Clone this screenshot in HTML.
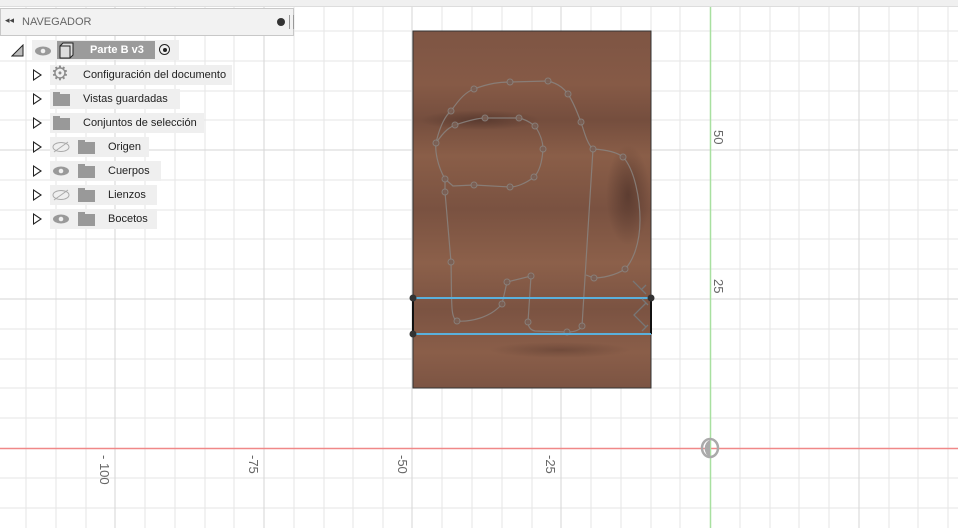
<!DOCTYPE html>
<html><head><meta charset="utf-8"><style>
body{margin:0;width:958px;height:528px;overflow:hidden;background:#fff;font-family:"Liberation Sans",sans-serif;position:relative}
.nav{position:absolute;left:0;top:8px;width:294px;height:28px;background:#f2f2f2;border:1px solid #c8c8c8;box-sizing:border-box}
.nav span{position:absolute;left:21px;top:7px;font-size:11px;color:#666}
.item{position:absolute;height:20px;background:#efefef;font-size:11px;color:#222;line-height:20px}
.tri{position:absolute;width:0;height:0;border-top:6px solid transparent;border-bottom:6px solid transparent;border-left:9px solid #222}
.tri:after{content:"";position:absolute;left:-8px;top:-4px;border-top:4px solid transparent;border-bottom:4px solid transparent;border-left:6px solid #fff}
.fold{position:absolute;width:17px;height:12px;background:#999}
.fold:before{content:"";position:absolute;left:0;top:-2px;width:7px;height:2px;background:#999}
</style></head><body>
<svg width="958" height="528" style="position:absolute;left:0;top:0">
<defs>
<linearGradient id="w" x1="0" y1="0" x2="0" y2="1">
<stop offset="0" stop-color="#7e5544"/><stop offset=".15" stop-color="#865a46"/><stop offset=".25" stop-color="#754e3e"/><stop offset=".35" stop-color="#8a5e48"/><stop offset=".5" stop-color="#7a5241"/><stop offset=".65" stop-color="#8c604a"/><stop offset=".78" stop-color="#7b5342"/><stop offset=".9" stop-color="#8a5e49"/><stop offset="1" stop-color="#7c5443"/>
</linearGradient>
<radialGradient id="d" cx=".5" cy=".5" r=".5"><stop offset="0" stop-color="#4e3229" stop-opacity=".7"/><stop offset="1" stop-color="#4e3229" stop-opacity="0"/></radialGradient>
</defs>
<rect x="0" y="0" width="958" height="6" fill="#f0f0f0"/>
<line x1="0" y1="6.5" x2="958" y2="6.5" stroke="#ddd"/>
<g stroke="#e6e6e6" stroke-width="1">
<path d="M26 7V528M56 7V528M86 7V528M145 7V528M175 7V528M205 7V528M234 7V528M294 7V528M324 7V528M353 7V528M383 7V528M442 7V528M472 7V528M502 7V528M532 7V528M591 7V528M621 7V528M651 7V528M680 7V528M740 7V528M770 7V528M799 7V528M829 7V528M889 7V528M918 7V528M948 7V528"/>
<path d="M0 31H958M0 61H958M0 91H958M0 120H958M0 180H958M0 210H958M0 239H958M0 269H958M0 329H958M0 359H958M0 388H958M0 418H958M0 478H958M0 508H958"/>
</g>
<g stroke="#d6d6d6"><path d="M115 7V528M264 7V528M412 7V528M561 7V528M859 7V528M0 150H958M0 299H958"/></g>
<rect x="413" y="31" width="238" height="357" fill="url(#w)" stroke="#333" stroke-width="1"/>
<ellipse cx="628" cy="195" rx="22" ry="50" fill="url(#d)"/>
<ellipse cx="480" cy="120" rx="60" ry="10" fill="url(#d)"/>
<ellipse cx="560" cy="350" rx="70" ry="8" fill="url(#d)" opacity=".6"/>
<g fill="none" stroke="#8a8480" stroke-width="1.2" opacity=".85">
<path d="M436 143C440 125 446 115 451 111C460 98 466 92 474 89C490 83 500 82 510 82L548 81C560 84 565 90 568 94C575 105 578 115 581 122C585 135 588 145 593 149L582 326C580 330 575 332 567 332L535 331C530 330 528 326 528 322L531 276L507 282L502 304C490 318 470 322 457 321C450 318 452 300 451 262L445 192L445 179C437 165 435 150 436 143Z"/>
<path d="M436 143C445 130 450 127 455 125C470 120 478 118 485 118L519 118C528 120 532 124 535 126C541 135 543 143 543 149C542 165 538 173 534 177C525 184 516 187 510 187L474 185L453 186L445 179"/>
<path d="M593 149C610 150 618 153 623 157C635 170 640 200 640 220C640 245 632 262 625 269C615 276 600 278 594 278L586 275"/>
</g>
<g fill="#7a5f54" stroke="#8a8480" opacity=".85"><circle cx="436" cy="143" r="3"/><circle cx="451" cy="111" r="3"/><circle cx="474" cy="89" r="3"/><circle cx="510" cy="82" r="3"/><circle cx="548" cy="81" r="3"/><circle cx="568" cy="94" r="3"/><circle cx="581" cy="122" r="3"/><circle cx="593" cy="149" r="3"/><circle cx="623" cy="157" r="3"/><circle cx="625" cy="269" r="3"/><circle cx="594" cy="278" r="3"/><circle cx="455" cy="125" r="3"/><circle cx="485" cy="118" r="3"/><circle cx="519" cy="118" r="3"/><circle cx="535" cy="126" r="3"/><circle cx="543" cy="149" r="3"/><circle cx="534" cy="177" r="3"/><circle cx="510" cy="187" r="3"/><circle cx="474" cy="185" r="3"/><circle cx="445" cy="179" r="3"/><circle cx="445" cy="192" r="3"/><circle cx="451" cy="262" r="3"/><circle cx="457" cy="321" r="3"/><circle cx="502" cy="304" r="3"/><circle cx="507" cy="282" r="3"/><circle cx="531" cy="276" r="3"/><circle cx="528" cy="322" r="3"/><circle cx="567" cy="332" r="3"/><circle cx="582" cy="326" r="3"/></g>
<line x1="413" y1="298" x2="413" y2="334" stroke="#111" stroke-width="2"/>
<line x1="651" y1="298" x2="651" y2="334" stroke="#111" stroke-width="2"/>
<line x1="413" y1="298" x2="651" y2="298" stroke="#5ab0dc" stroke-width="2"/>
<line x1="413" y1="334" x2="651" y2="334" stroke="#5ab0dc" stroke-width="2"/>
<path d="M633 281L646 294M641 290L646 285M646 303L634 315L646 327M642 299L648 305M642 331L648 325" stroke="#777" stroke-width="1.3" fill="none"/>
<g fill="#333"><circle cx="413" cy="298" r="3.5"/><circle cx="651" cy="298" r="3.5"/><circle cx="413" cy="334" r="3.5"/></g>
<line x1="0" y1="448.5" x2="958" y2="448.5" stroke="#f08888" stroke-width="1.5"/>
<line x1="710.5" y1="7" x2="710.5" y2="528" stroke="#a8e0a0" stroke-width="1.5"/>
<ellipse cx="710" cy="448" rx="8" ry="9" fill="none" stroke="#aaa" stroke-width="2.5"/>
<path d="M710 440A8 9 0 0 0 710 457Z" fill="#aaa"/>
<g fill="#666" font-size="13" font-family="Liberation Sans">
<text transform="translate(100,455) rotate(90)">- 100</text>
<text transform="translate(249,455) rotate(90)">-75</text>
<text transform="translate(398,455) rotate(90)">-50</text>
<text transform="translate(546,455) rotate(90)">-25</text>
<text transform="translate(714,130) rotate(90)">50</text>
<text transform="translate(714,279) rotate(90)">25</text>
</g>
</svg>
<div class="nav"><span style="left:4px;top:6px;font-size:9px;color:#444">◂◂</span><span>NAVEGADOR</span>
<div style="position:absolute;left:276px;top:9px;width:8px;height:8px;border-radius:50%;background:#333"></div>
<div style="position:absolute;left:288px;top:6px;width:3px;height:14px;border-left:1px solid #999;border-right:1px solid #999"></div></div>
<svg width="14" height="14" style="position:absolute;left:11px;top:44px"><path d="M1 12H12V1Z" fill="#bbb" stroke="#222"/></svg>
<div class="item" style="left:32px;top:40px;width:147px;"></div>
<svg width="18" height="12" style="position:absolute;left:34px;top:45px"><ellipse cx="9" cy="6" rx="8" ry="4.5" fill="#999"/><circle cx="9" cy="6" r="2.3" fill="#efefef"/></svg>
<div style="position:absolute;left:57px;top:41px;width:98px;height:18px;background:#9b9b9b"></div>
<svg width="18" height="17" style="position:absolute;left:58px;top:42px"><path d="M2 4L5 1H15V13L12 16H2Z" fill="#ddd" stroke="#222"/><path d="M2 4H12V16" fill="none" stroke="#222"/></svg>
<div style="position:absolute;left:90px;top:42px;font-size:11px;color:#fff;font-weight:bold;line-height:17px">Parte B v3</div>
<div style="position:absolute;left:159px;top:44px;width:11px;height:11px;border:1.3px solid #222;border-radius:50%;box-sizing:border-box"></div>
<div style="position:absolute;left:163px;top:48px;width:4px;height:4px;border-radius:50%;background:#222"></div>

<div class="tri" style="left:33px;top:69px"></div><div class="item" style="left:50px;top:65px;width:182px"><span style="position:absolute;left:33px">Configuración del documento</span></div>
<div style="position:absolute;left:51px;top:65px;font-size:20px;line-height:18px;color:#8c8c8c">⚙</div>
<div class="tri" style="left:33px;top:93px"></div><div class="item" style="left:50px;top:89px;width:130px"><span style="position:absolute;left:33px">Vistas guardadas</span></div><div class="fold" style="left:53px;top:94px"></div>
<div class="tri" style="left:33px;top:117px"></div><div class="item" style="left:50px;top:113px;width:154px"><span style="position:absolute;left:33px">Conjuntos de selección</span></div><div class="fold" style="left:53px;top:118px"></div>
<div class="tri" style="left:33px;top:141px"></div><div class="item" style="left:50px;top:137px;width:99px"><span style="position:absolute;left:58px">Origen</span></div><div class="fold" style="left:78px;top:142px"></div>
<svg width="18" height="12" style="position:absolute;left:52px;top:141px"><ellipse cx="9" cy="6" rx="8" ry="4.5" fill="none" stroke="#aaa"/><path d="M2 11L16 1" stroke="#aaa"/></svg>
<div class="tri" style="left:33px;top:165px"></div><div class="item" style="left:50px;top:161px;width:111px"><span style="position:absolute;left:58px">Cuerpos</span></div><div class="fold" style="left:78px;top:166px"></div>
<svg width="18" height="12" style="position:absolute;left:52px;top:165px"><ellipse cx="9" cy="6" rx="8" ry="4.5" fill="#999"/><circle cx="9" cy="6" r="2.3" fill="#efefef"/></svg>
<div class="tri" style="left:33px;top:189px"></div><div class="item" style="left:50px;top:185px;width:107px"><span style="position:absolute;left:58px">Lienzos</span></div><div class="fold" style="left:78px;top:190px"></div>
<svg width="18" height="12" style="position:absolute;left:52px;top:189px"><ellipse cx="9" cy="6" rx="8" ry="4.5" fill="none" stroke="#aaa"/><path d="M2 11L16 1" stroke="#aaa"/></svg>
<div class="tri" style="left:33px;top:213px"></div><div class="item" style="left:50px;top:209px;width:107px"><span style="position:absolute;left:58px">Bocetos</span></div><div class="fold" style="left:78px;top:214px"></div>
<svg width="18" height="12" style="position:absolute;left:52px;top:213px"><ellipse cx="9" cy="6" rx="8" ry="4.5" fill="#999"/><circle cx="9" cy="6" r="2.3" fill="#efefef"/></svg>
</body></html>
